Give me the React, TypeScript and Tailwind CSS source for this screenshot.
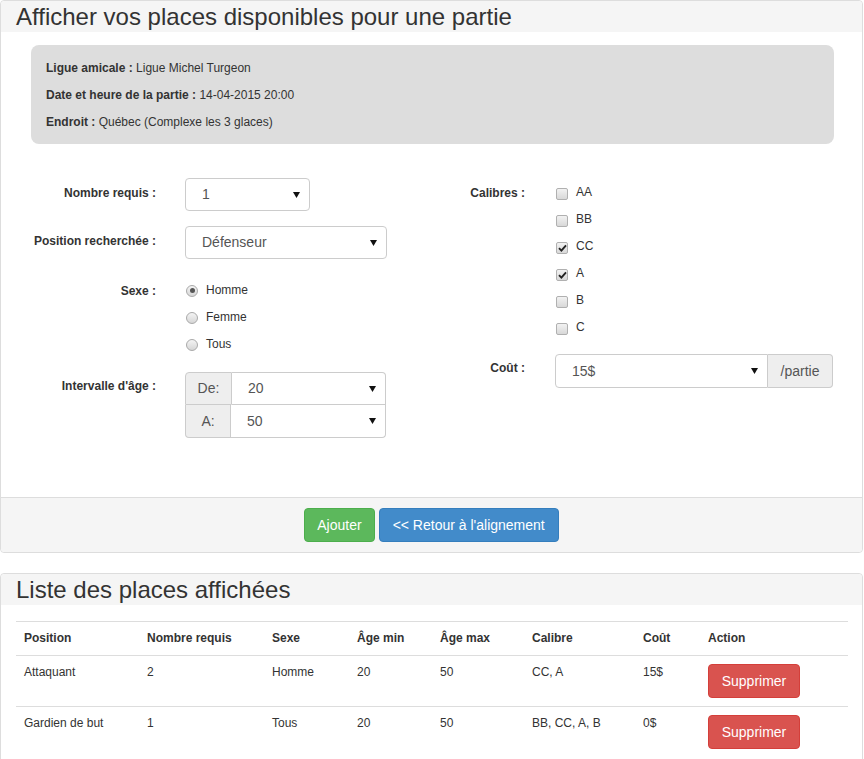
import React from "react";

function Arrow() {
  return (
    <svg width="7" height="6" viewBox="0 0 7 6" className="shrink-0">
      <path d="M0 0 L7 0 L3.5 6 Z" fill="#111" />
    </svg>
  );
}

function Select({ value, className = "" }: { value: string; className?: string }) {
  return (
    <div
      className={`flex items-center justify-between h-[33px] border border-[#ccc] bg-white pl-4 pr-[9px] text-[14px] text-[#555] ${className}`}
    >
      <span>{value}</span>
      <Arrow />
    </div>
  );
}

function Radio({ checked }: { checked?: boolean }) {
  return (
    <span className="flex items-center justify-center w-[12px] h-[12px] rounded-full border border-[#a9a9a9] bg-gradient-to-b from-[#f4f4f4] to-[#d6d6d6] shrink-0">
      {checked && <span className="w-[5px] h-[5px] rounded-full bg-[#555]" />}
    </span>
  );
}

function Check({ checked }: { checked?: boolean }) {
  return (
    <span className="flex items-center justify-center w-[12px] h-[12px] rounded-[2px] border border-[#b0b0b0] bg-gradient-to-b from-[#f2f2f2] to-[#d8d8d8] shrink-0">
      {checked && (
        <svg width="9" height="8" viewBox="0 0 9 8">
          <path d="M1 4.2 L3.4 6.6 L8 1.4" stroke="#222" strokeWidth="1.9" fill="none" />
        </svg>
      )}
    </span>
  );
}

const rows = [
  ["Attaquant", "2", "Homme", "20", "50", "CC, A", "15$"],
  ["Gardien de but", "1", "Tous", "20", "50", "BB, CC, A, B", "0$"],
];

const cols = ["w-[123px]", "w-[125px]", "w-[85px]", "w-[83px]", "w-[92px]", "w-[111px]", "w-[65px]", ""];

export default function App() {
  return (
    <div className="font-['Liberation_Sans',Arial,sans-serif] text-[#333] bg-white min-h-[759px] w-[864px] overflow-hidden">
      {/* Panel 1 */}
      <div className="border border-[#ddd] rounded-[4px] w-[863px] bg-white">
        <div className="bg-[#f5f5f5] h-[31px] pl-[15px] rounded-t-[4px]">
          <h1 className="text-[24px] leading-[31px] text-[#333]">
            Afficher vos places disponibles pour une partie
          </h1>
        </div>
        <div className="pl-[30px] pr-[28px] pt-[13px]">
          <div className="bg-[#dddddd] rounded-[8px] h-[99px] px-[15px] pt-[15px] text-[12px] flex flex-col gap-[10px]">
            <p className="leading-[17px]">
              <b>Ligue amicale :</b> Ligue Michel Turgeon
            </p>
            <p className="leading-[17px]">
              <b>Date et heure de la partie :</b> 14-04-2015 20:00
            </p>
            <p className="leading-[17px]">
              <b>Endroit :</b> Québec (Complexe les 3 glaces)
            </p>
          </div>
        </div>

        {/* form */}
        <div className="flex pt-[34px] pb-[59px] text-[12px]">
          {/* left column */}
          <div className="w-[431px] pl-[15px] flex flex-col">
            <div className="flex">
              <label className="w-[140px] text-right font-bold pt-[7px] leading-[17px]">Nombre requis :</label>
              <Select value="1" className="ml-[29px] w-[125px] h-[33px] rounded-[4px]" />
            </div>
            <div className="flex mt-[15px]">
              <label className="w-[140px] text-right font-bold pt-[7px] leading-[17px]">Position recherchée :</label>
              <Select value="Défenseur" className="ml-[29px] w-[202px] h-[33px] rounded-[4px]" />
            </div>
            <div className="flex mt-[18px]">
              <label className="w-[140px] text-right font-bold pt-[6px] leading-[17px]">Sexe :</label>
              <div className="ml-[29px] flex flex-col">
                {[
                  ["Homme", true],
                  ["Femme", false],
                  ["Tous", false],
                ].map(([t, c]) => (
                  <div key={t as string} className="flex items-center gap-[8px] h-[27px] pl-[1px]">
                    <Radio checked={c as boolean} />
                    <span className="leading-[17px] -mt-[1px]">{t as string}</span>
                  </div>
                ))}
              </div>
            </div>
            <div className="flex mt-[14px]">
              <label className="w-[140px] text-right font-bold pt-[6px] leading-[17px]">Intervalle d'âge :</label>
              <div className="ml-[29px] flex flex-col w-[201px]">
                <div className="flex h-[33px]">
                  <span className="w-[47px] flex items-center justify-center bg-[#eee] border border-[#ccc] rounded-tl-[4px] text-[14px] text-[#555]">
                    De:
                  </span>
                  <Select value="20" className="flex-1 border-l-0 rounded-tr-[4px]" />
                </div>
                <div className="flex h-[33px]">
                  <span className="w-[46px] flex items-center justify-center bg-[#eee] border border-[#ccc] border-t-0 rounded-bl-[4px] text-[14px] text-[#555]">
                    A:
                  </span>
                  <Select value="50" className="flex-1 border-l-0 border-t-0 rounded-br-[4px]" />
                </div>
              </div>
            </div>
          </div>

          {/* right column */}
          <div className="flex-1 flex flex-col">
            <div className="flex">
              <label className="w-[93px] text-right font-bold pt-[7px] leading-[17px]">Calibres :</label>
              <div className="ml-[31px] flex flex-col mt-[2px]">
                {[
                  ["AA", false],
                  ["BB", false],
                  ["CC", true],
                  ["A", true],
                  ["B", false],
                  ["C", false],
                ].map(([t, c]) => (
                  <div key={t as string} className="flex items-center gap-[8px] h-[27px]">
                    <Check checked={c as boolean} />
                    <span className="leading-[17px] -mt-[2px]">{t as string}</span>
                  </div>
                ))}
              </div>
            </div>
            <div className="flex mt-[12px]">
              <label className="w-[93px] text-right font-bold pt-[6px] leading-[17px]">Coût :</label>
              <div className="ml-[30px] flex h-[34px]">
                <Select value="15$" className="w-[213px] h-[34px] rounded-l-[4px]" />
                <span className="w-[65px] flex items-center justify-center bg-[#eee] border border-[#ccc] border-l-0 rounded-r-[4px] text-[14px] text-[#555]">
                  /partie
                </span>
              </div>
            </div>
          </div>
        </div>

        {/* footer */}
        <div className="border-t border-[#ddd] bg-[#f5f5f5] h-[55px] flex items-center justify-center gap-[4px] rounded-b-[4px]">
          <button className="h-[34px] px-[12px] bg-[#5cb85c] border border-[#4cae4c] rounded-[4px] text-white text-[14px]">
            Ajouter
          </button>
          <button className="h-[34px] px-[13px] bg-[#428bca] border border-[#357ebd] rounded-[4px] text-white text-[14px]">
            &lt;&lt; Retour à l'alignement
          </button>
        </div>
      </div>

      {/* Panel 2 */}
      <div className="mt-[20px] border border-[#ddd] rounded-[4px] w-[863px] bg-white pb-[15px]">
        <div className="bg-[#f5f5f5] h-[31px] pl-[15px] rounded-t-[4px]">
          <h2 className="text-[24px] leading-[31px] text-[#333]">Liste des places affichées</h2>
        </div>
        <div className="px-[15px] pt-[16px]">
          <table className="w-[832px] text-[12px] border-collapse">
            <thead>
              <tr className="border-t border-b border-[#ddd]">
                {["Position", "Nombre requis", "Sexe", "Âge min", "Âge max", "Calibre", "Coût", "Action"].map((h, i) => (
                  <th key={h} className={`${cols[i]} text-left font-bold px-[8px] py-[8px] leading-[17px] align-bottom`}>
                    {h}
                  </th>
                ))}
              </tr>
            </thead>
            <tbody>
              {rows.map((r, ri) => (
                <tr key={ri} className="border-t border-[#ddd]">
                  {r.map((c, i) => (
                    <td key={i} className="px-[8px] py-[8px] leading-[17px] align-top">
                      {c}
                    </td>
                  ))}
                  <td className="px-[8px] py-[8px] align-top">
                    <button className="h-[34px] w-[92px] bg-[#d9534f] border border-[#d43f3a] rounded-[4px] text-white text-[14px]">
                      Supprimer
                    </button>
                  </td>
                </tr>
              ))}
            </tbody>
          </table>
        </div>
      </div>
    </div>
  );
}
